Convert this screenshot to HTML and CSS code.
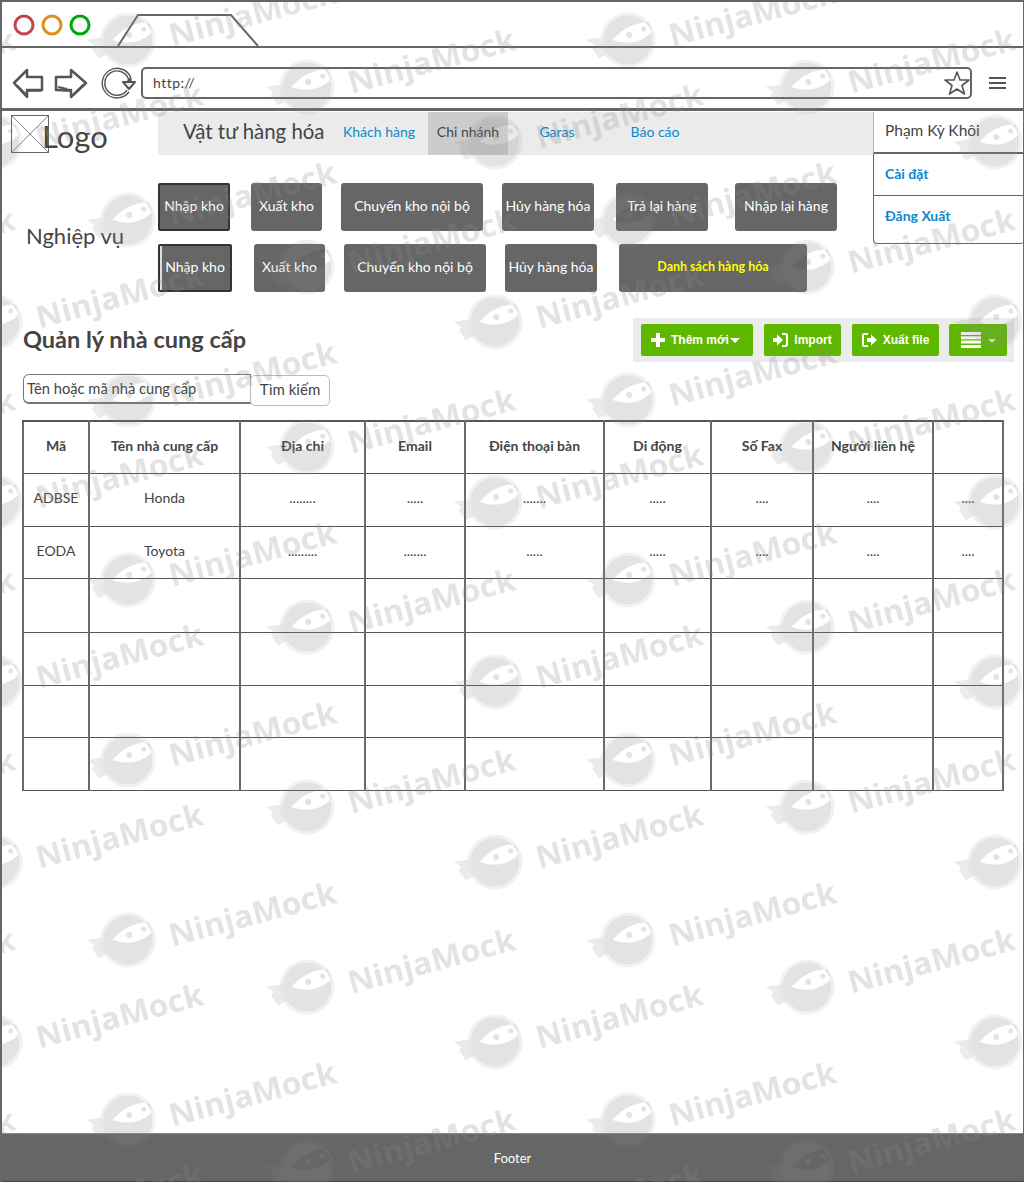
FILE: index.html
```html
<!DOCTYPE html>
<html lang="vi">
  <head>
    <meta charset="UTF-8" />
    <meta name="viewport" content="width=device-width, initial-scale=1.0" />
    <title>Quản lý nhà cung cấp</title>
    <link rel="stylesheet" href="styles.css">
  </head>
  <body>
    <div class="page">
      <!-- Browser frame -->
      <div class="tab-row">
        <svg class="tab-icons" width="260" height="44" viewBox="0 0 260 44">
          <circle cx="22" cy="23" r="9" fill="none" stroke="#c1474f" stroke-width="3" />
          <circle cx="50" cy="23" r="9" fill="none" stroke="#e08e1e" stroke-width="3" />
          <circle cx="78" cy="23" r="9" fill="none" stroke="#00a80d" stroke-width="3" />
          <path d="M116 44 L136 13 L229 13 L256 44" fill="none" stroke="#666" stroke-width="2" />
        </svg>
      </div>
      <div class="address-row">
        <svg class="nav-icons" width="130" height="34" viewBox="0 0 130 34">
          <path d="M3 17 L16 4 V11 H31 V24 H16 V31 Z" fill="#fff" stroke="#555" stroke-width="2.5" stroke-linejoin="round" />
          <path d="M17 25 L30 25 M6 19 L15 28" stroke="#555" stroke-width="1.5" />
          <path d="M75 17 L60 4 V11 H45 V24 H60 V31 Z" fill="#fff" stroke="#555" stroke-width="2.5" stroke-linejoin="round" />
          <path d="M46 24 L60 25 M47 21 L56 23 M72 19 L62 29" stroke="#555" stroke-width="2" />
          <path d="M117 25 A13.500 13.500 0 1 1 118.500 12 Q119 14 118 16" fill="none" stroke="#555" stroke-width="4" />
          <path d="M117 25 A13.500 13.500 0 1 1 118.500 12" fill="none" stroke="#fff" stroke-width="1.200" />
          <path d="M112 16 L124 16 L118 23 Z" fill="#fff" stroke="#555" stroke-width="2" stroke-linejoin="round" />
        </svg>
        <div class="url-bar">
          <span class="url-text">http://</span>
          <svg width="26" height="26" viewBox="0 0 26 26">
            <path d="M13 2 L16 10 L25 10 L18 15.500 L20.500 24 L13 19 L5.500 24 L8 15.500 L1 10 L10 10 Z" fill="#fff" stroke="#555" stroke-width="1.600" stroke-linejoin="round" />
          </svg>
        </div>
        <div class="burger"><span></span><span></span><span></span></div>
      </div>

      <!-- Top nav -->
      <div class="top-row">
        <div class="logo">
          <svg width="38" height="38" viewBox="0 0 38 38">
            <rect x="0.500" y="0.500" width="37" height="37" fill="#fff" stroke="#666" />
            <path d="M0 0 L38 38 M38 0 L0 38" stroke="#666" stroke-width="0.800" />
          </svg>
          <span class="logo-text">Logo</span>
        </div>
        <div class="nav-bar">
          <span class="nav-title">Vật tư hàng hóa</span>
          <a class="nav-link">Khách hàng</a>
          <a class="nav-link active">Chi nhánh</a>
          <a class="nav-link">Garas</a>
          <a class="nav-link">Báo cáo</a>
        </div>
      </div>

      <div class="user-menu">
        <div class="user-name">Phạm Kỳ Khôi</div>
        <div class="user-links">
          <a class="user-link">Cài đặt</a>
          <a class="user-link">Đăng Xuất</a>
        </div>
      </div>

      <!-- Operations -->
      <div class="ops">
        <div class="ops-label">Nghiệp vụ</div>
        <div class="ops-rows">
          <div class="ops-row first">
            <button class="op-btn selected">Nhập kho</button>
            <button class="op-btn">Xuất kho</button>
            <button class="op-btn">Chuyển kho nội bộ</button>
            <button class="op-btn">Hủy hàng hóa</button>
            <button class="op-btn">Trả lại hàng</button>
            <button class="op-btn">Nhập lại hàng</button>
          </div>
          <div class="ops-row second">
            <button class="op-btn selected">Nhập kho</button>
            <button class="op-btn">Xuất kho</button>
            <button class="op-btn">Chuyển kho nội bộ</button>
            <button class="op-btn">Hủy hàng hóa</button>
            <button class="op-btn highlight">Danh sách hàng hóa</button>
          </div>
        </div>
      </div>

      <!-- Title and actions -->
      <div class="title-row">
        <h1 class="page-title">Quản lý nhà cung cấp</h1>
        <div class="toolbar">
          <button class="tool-btn add">
            <svg width="14" height="14" viewBox="0 0 14 14"><path d="M5 0 H9 V5 H14 V9 H9 V14 H5 V9 H0 V5 H5 Z" fill="#fff" /></svg>
            Thêm mới
            <i class="caret big"></i>
          </button>
          <button class="tool-btn import">
            <svg width="15" height="14" viewBox="0 0 15 14"><path d="M0 5 H4 V1.500 L10 7 L4 12.500 V9 H0 Z" fill="#fff" /><path d="M9 1 H13 A1.500 1.500 0 0 1 14 2.500 V11.500 A1.500 1.500 0 0 1 13 13 H9" fill="none" stroke="#fff" stroke-width="2" /></svg>
            Import
          </button>
          <button class="tool-btn export">
            <svg width="15" height="14" viewBox="0 0 15 14"><path d="M6 1 H2.500 A1.500 1.500 0 0 0 1 2.500 V11.500 A1.500 1.500 0 0 0 2.500 13 H6" fill="none" stroke="#fff" stroke-width="2" /><path d="M5 5 H9 V1.500 L15 7 L9 12.500 V9 H5 Z" fill="#fff" /></svg>
            Xuất file
          </button>
          <button class="tool-btn list">
            <svg width="20" height="16" viewBox="0 0 20 16"><path d="M0 0 H20 V3 H0 Z M0 4.300 H20 V7.300 H0 Z M0 8.600 H20 V11.600 H0 Z M0 13 H20 V16 H0 Z" fill="#fff" /></svg>
            <i class="caret"></i>
          </button>
        </div>
      </div>

      <div class="search">
        <input class="search-input" type="text" placeholder="Tên hoặc mã nhà cung cấp" />
        <button class="search-btn">Tìm kiếm</button>
      </div>

      <table class="supplier-table">
        <thead>
          <tr>
            <th>Mã</th>
            <th>Tên nhà cung cấp</th>
            <th>Địa chỉ</th>
            <th>Email</th>
            <th>Điện thoại bàn</th>
            <th>Di động</th>
            <th>Số Fax</th>
            <th>Người liên hệ</th>
            <th></th>
          </tr>
        </thead>
        <tbody>
          <tr>
            <td>ADBSE</td><td>Honda</td><td>........</td><td>.....</td><td>.......</td><td>.....</td><td>....</td><td>....</td><td>....</td>
          </tr>
          <tr>
            <td>EODA</td><td>Toyota</td><td>.........</td><td>.......</td><td>.....</td><td>.....</td><td>....</td><td>....</td><td>....</td>
          </tr>
          <tr><td></td><td></td><td></td><td></td><td></td><td></td><td></td><td></td><td></td></tr>
          <tr><td></td><td></td><td></td><td></td><td></td><td></td><td></td><td></td><td></td></tr>
          <tr><td></td><td></td><td></td><td></td><td></td><td></td><td></td><td></td><td></td></tr>
          <tr><td></td><td></td><td></td><td></td><td></td><td></td><td></td><td></td><td></td></tr>
        </tbody>
      </table>

      <div class="footer">Footer</div>

      <!-- Watermark tiles over the whole page -->
      <svg class="watermark" width="1024" height="1182">
        <defs>
          <g id="mark" transform="rotate(-15)">
            <circle r="26" fill="none" stroke="#888" stroke-opacity="0.500" stroke-width="3" />
            <path fill-rule="evenodd" fill="#888" d="M0 -24.500 A24.500 24.500 0 1 1 -0.100 -24.500 Z M-15 -4 Q4 -17 24 -12 Q27 -6 23 0 Q4 9 -15 -4 Z" />
            <circle cx="2.500" cy="-4.500" r="3" fill="#888" />
            <circle cx="18" cy="-6.500" r="2.500" fill="#888" />
            <path d="M-24 -9 L-40 -11 L-34 -4 L-37 -1 L-33 10 L-22 8 Z" fill="#888" fill-opacity="0.700" />
            <text x="41" y="18" font-family="Open Sans, sans-serif" font-weight="700" font-size="31" textLength="172" lengthAdjust="spacingAndGlyphs" fill="#888">NinjaMock</text>
          </g>
          <pattern id="tile" width="500" height="180" patternUnits="userSpaceOnUse">
            <use href="#mark" transform="translate(-5 142)" />
            <use href="#mark" transform="translate(495 142)" />
            <use href="#mark" transform="translate(128 40)" />
            <use href="#mark" transform="translate(128 220)" />
            <use href="#mark" transform="translate(307 87)" />
            <use href="#mark" transform="translate(-193 87)" />
          </pattern>
        </defs>
        <rect width="1024" height="1182" fill="url(#tile)" opacity="0.235" />
      </svg>
    </div>
  </body>
</html>
```

FILE: styles.css
```css
* {
    box-sizing: border-box;
}

body, html {
    margin: 0;
    padding: 0;
    background-color: #fff;
    font-family: "Lato", "Noto Sans", sans-serif;
    color: #444;
}

.page {
    position: relative;
    width: 1024px;
    height: 1182px;
    border: 2px solid #666;
    border-bottom: 0;
    border-right-width: 1px;
    display: flex;
    flex-direction: column;
    overflow: hidden;
}

/* browser frame */
.tab-row {
    height: 46px;
    border-bottom: 2px solid #666;
}

.tab-icons {
    display: block;
}

.address-row {
    height: 63px;
    border-bottom: 3px solid #666;
    display: flex;
    align-items: center;
    padding-top: 10px;
}

.nav-icons {
    flex: none;
    margin-left: 9px;
}

.url-bar {
    width: 831px;
    height: 32px;
    border: 2px solid #666;
    border-radius: 5px;
    display: flex;
    align-items: center;
    justify-content: space-between;
    padding: 0 0 0 10px;
}

.url-text {
    font-size: 14px;
    letter-spacing: 0.5px;
    padding-bottom: 2px;
}

.burger {
    margin-left: 17px;
    width: 17px;
    display: flex;
    flex-direction: column;
    gap: 3px;
}

.burger span {
    height: 2px;
    background-color: #555;
}

/* top nav */
.top-row {
    display: flex;
    height: 44px;
    padding-top: 1px;
}

.logo {
    width: 156px;
    padding: 3px 0 0 9px;
    display: flex;
    align-items: flex-start;
}

.logo-text {
    font-size: 31px;
    line-height: 38px;
    margin: 2px 0 0 -7px;
    color: #444;
}

.nav-bar {
    flex: 1;
    background-color: #ebebeb;
    height: 43px;
    display: flex;
    align-items: center;
    padding-left: 25px;
}

.nav-title {
    font-size: 20.400px;
    width: 161px;
    white-space: nowrap;
    padding-bottom: 5px;
}

.nav-link {
    font-size: 14px;
    color: #0a88cf;
    height: 100%;
    white-space: nowrap;
    display: flex;
    align-items: center;
    justify-content: center;
    padding-bottom: 4px;
}

.nav-link:nth-child(2) { width: 70px; margin-right: 14px; }
.nav-link:nth-child(3) { width: 80px; margin-right: 31px; }
.nav-link:nth-child(4) { width: 36px; margin-right: 56px; }
.nav-link:nth-child(5) { width: 48px; }

.nav-link.active {
    background-color: #ccc;
    color: #444;
}

.user-menu {
    position: absolute;
    top: 110px;
    right: -1px;
    width: 151px;
    background-color: #fff;
}

.user-name {
    height: 42px;
    border-left: 1px solid #bbb;
    border-bottom: 2px solid #666;
    font-size: 15.500px;
    padding: 0 0 4px 11px;
    display: flex;
    align-items: center;
}

.user-links {
    border-left: 1px solid #666;
    border-radius: 0 0 4px 4px;
    height: 90px;
}

.user-link {
    display: flex;
    align-items: center;
    height: 42px;
    padding: 0 0 2px 11px;
    color: #0a88cf;
    font-size: 14px;
    font-weight: 700;
    border-bottom: 1px solid #666;
}

.user-link:last-child {
    height: 48px;
    padding-bottom: 8px;
    border-radius: 0 0 4px 4px;
}

/* operations */
.ops {
    display: flex;
    align-items: center;
    margin-top: 28px;
}

.ops-label {
    width: 156px;
    padding: 0 0 5px 24px;
    font-size: 22px;
}

.ops-rows {
    display: flex;
    flex-direction: column;
    gap: 13px;
}

.ops-row {
    display: flex;
}

.op-btn {
    height: 48px;
    border: 0;
    border-radius: 3px;
    background-color: #666;
    color: #fff;
    font-family: inherit;
    font-size: 14px;
    padding: 0 0 3px;
}

.op-btn.selected {
    border: 2px solid #333;
    border-radius: 2px;
}

.second .op-btn.selected {
    box-shadow: inset 2px 0 0 #ddd;
}

.op-btn.highlight {
    color: #ffff00;
    font-size: 12.500px;
    font-weight: 700;
}

.first .op-btn:nth-child(1) { width: 72px; margin-right: 21px; }
.first .op-btn:nth-child(2) { width: 71px; margin-right: 19px; }
.first .op-btn:nth-child(3) { width: 142px; margin-right: 19px; }
.first .op-btn:nth-child(4) { width: 92px; margin-right: 22px; }
.first .op-btn:nth-child(5) { width: 92px; margin-right: 27px; }
.first .op-btn:nth-child(6) { width: 102px; }

.second .op-btn:nth-child(1) { width: 74px; margin-right: 22px; }
.second .op-btn:nth-child(2) { width: 71px; margin-right: 19px; }
.second .op-btn:nth-child(3) { width: 142px; margin-right: 19px; }
.second .op-btn:nth-child(4) { width: 92px; margin-right: 22px; }
.second .op-btn:nth-child(5) { width: 188px; }

/* title row */
.title-row {
    display: flex;
    align-items: center;
    justify-content: space-between;
    margin-top: 26px;
    padding: 0 9px 0 21px;
}

.page-title {
    margin: 0;
    font-size: 23.500px;
    font-weight: 700;
    color: #444;
    padding-bottom: 2px;
}

.toolbar {
    width: 381px;
    height: 44px;
    background-color: #ebebeb;
    display: flex;
    align-items: center;
    padding-left: 8px;
}

.tool-btn {
    height: 32px;
    border: 0;
    border-radius: 2px;
    background-color: #5fb800;
    color: #fff;
    font-family: "Liberation Sans", Arial, sans-serif;
    font-size: 12px;
    font-weight: 700;
    display: flex;
    align-items: center;
    justify-content: center;
    padding: 0;
}

.tool-btn.add { width: 112px; margin-right: 11px; gap: 6px; justify-content: flex-start; padding-left: 10px; }
.tool-btn.import { width: 77px; margin-right: 11px; gap: 6px; }
.tool-btn.export { width: 87px; margin-right: 10px; gap: 6px; }
.tool-btn.list { width: 58px; gap: 7px; }

.caret {
    width: 0;
    height: 0;
    border-left: 4px solid transparent;
    border-right: 4px solid transparent;
    border-top: 4px solid #e4f3d0;
    margin-top: 2px;
}

.caret.big {
    border-left-width: 5px;
    border-right-width: 5px;
    border-top: 5px solid #fff;
    margin-left: -5px;
    margin-top: 0;
}

/* search */
.search {
    display: flex;
    margin: 12px 0 0 21px;
}

.search-input {
    width: 228px;
    height: 30px;
    border: 1px solid #777;
    border-bottom-width: 2px;
    border-radius: 6px 0 0 6px;
    padding: 0 3px 1px;
    font-family: inherit;
    font-size: 14.700px;
    background: transparent;
    outline: none;
}

.search-input::placeholder {
    color: #444;
    opacity: 1;
}

.search-btn {
    width: 80px;
    height: 31px;
    margin: 1px 0 0 -1px;
    border: 1px solid #bbb;
    border-radius: 5px;
    background-color: #fff;
    color: #444;
    font-family: inherit;
    font-size: 15px;
    padding: 0 0 4px;
}

/* table */
.supplier-table {
    margin: 14px 0 0 20px;
    width: 981px;
    border-collapse: collapse;
    table-layout: fixed;
}

.supplier-table th,
.supplier-table td {
    border: 1px solid #555;
    border-left: 2px solid #6a6a6a;
    border-right: 2px solid #6a6a6a;
    padding: 0 0 4px;
    text-align: center;
    font-size: 14px;
    font-weight: 400;
    color: #444;
}

.supplier-table th {
    font-weight: 700;
    height: 52px;
    border-top-width: 2px;
}

.supplier-table tbody tr:nth-child(1) td { height: 53px; }
.supplier-table tbody tr:nth-child(2) td { height: 52px; }
.supplier-table tbody tr:nth-child(3) td { height: 54px; }
.supplier-table tbody tr:nth-child(4) td { height: 53px; }
.supplier-table tbody tr:nth-child(5) td { height: 52px; }
.supplier-table tbody tr:nth-child(6) td { height: 53px; }

.supplier-table th:nth-child(1) { width: 66px; }
.supplier-table th:nth-child(2) { width: 151px; }
.supplier-table th:nth-child(3) { width: 125px; }
.supplier-table th:nth-child(4) { width: 100px; }
.supplier-table th:nth-child(5) { width: 139px; }
.supplier-table th:nth-child(6) { width: 107px; }
.supplier-table th:nth-child(7) { width: 102px; }
.supplier-table th:nth-child(8) { width: 120px; }
.supplier-table th:nth-child(9) { width: 70px; }

.footer {
    margin: auto -2px 0;
    height: 49px;
    background-color: #666;
    border-top: 1px solid #888;
    border-bottom: 1px solid #444;
    color: #fff;
    font-size: 13px;
    display: flex;
    align-items: center;
    justify-content: center;
}

.watermark {
    position: absolute;
    top: -2px;
    left: -2px;
    pointer-events: none;
}
```
